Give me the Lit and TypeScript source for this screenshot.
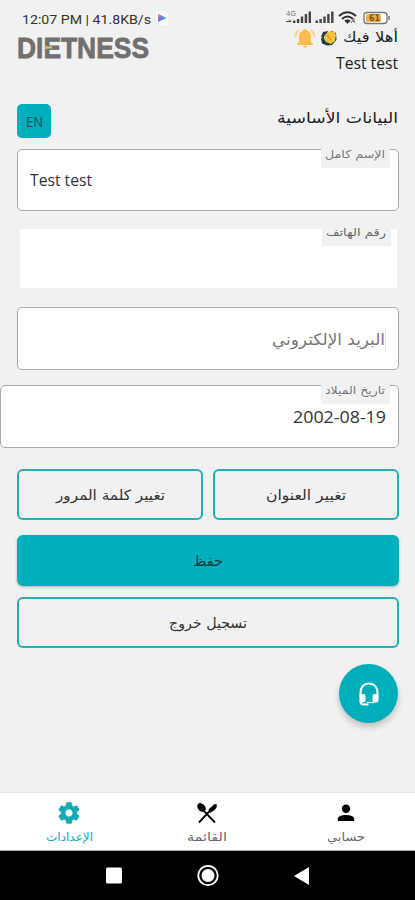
import { LitElement, html, svg, css } from "lit";
import { customElement } from "lit/decorators.js";

const bars = (x: number) => svg`
  ${[2.5, 4, 6.5, 9, 11.5].map((h, i) => svg`<rect x=${x + i * 3.9} y=${15 - h} width="2.4" height=${h} fill="#444"/>`)}`;

/** A single line of text set to an exact advance width. */
const fit = (text: string, width: number, size: number, face = "arabic") => html`
  <svg class="fit ${face}" width=${width} height=${Math.round(size * 1.6)}>
    <text x=${width / 2} y=${Math.round(size * 1.1)} font-size=${size} text-anchor="middle"
      textLength=${width} lengthAdjust="spacingAndGlyphs">${text}</text>
  </svg>`;

@customElement("app-root")
export class AppRoot extends LitElement {
  static styles = css`
    :host {
      display: flex;
      flex-direction: column;
      width: 415px;
      height: 900px;
      overflow: hidden;
      background: #f1f1f1;
      color: #222;
      font-family: "DejaVu Sans", sans-serif;
    }
    * { box-sizing: border-box; }
    svg { display: block; flex: none; overflow: visible; }
    .fit { fill: currentColor; }
    .arabic { font-family: "DejaVu Sans", sans-serif; direction: rtl; }
    .latin { font-family: "Open Sans", sans-serif; direction: ltr; }
    .clockface { font-family: Roboto, sans-serif; }
    .status {
      height: 28px;
      padding: 8px 23px 0 22px;
      display: flex;
      justify-content: space-between;
      color: #333;
    }
    .clock { display: flex; gap: 5px; padding-top: 1px; }
    .header { height: 64px; padding: 0 17px; display: flex; justify-content: space-between; }
    .logo { margin-top: 5px; }
    .logo text { font: bold 30px "Liberation Sans", sans-serif; }
    .greeting { display: flex; flex-direction: column; align-items: flex-end; }
    .hello { display: flex; align-items: center; height: 20px; gap: 4px; }
    .hello .fit { margin-left: 1px; }
    .user { margin-top: 3px; }
    .title {
      height: 57px;
      padding: 12px 17px 0;
      display: flex;
      justify-content: space-between;
    }
    .lang {
      width: 34px; height: 34px; border-radius: 5px; background: #00afbb;
      display: grid; place-items: center; color: #174c52; padding-top: 3px;
    }
    .heading { padding-top: 2px; }
    .field {
      position: relative;
      height: 62px;
      margin: 0 16px 0 17px;
      border: 1px solid #aaa;
      border-radius: 5px;
      background: #fff;
      display: flex;
      align-items: center;
      justify-content: flex-end;
      padding: 2px 12px 0;
      flex: none;
      color: #333;
    }
    .name { justify-content: flex-start; }
    .phone { height: 59px; margin: 18px 18px 0 20px; border: 0; border-radius: 0; }
    .email { margin-top: 19px; height: 63px; color: #777; }
    .date { margin: 15px 16px 0 0; height: 63px; }
    .label {
      position: absolute; right: 8px; top: -4px; width: 69px; height: 22px;
      background: #f1f1f1; color: #777;
      display: flex; justify-content: flex-end; padding: 0 5px 0 0;
    }
    .phone .label { right: 6px; top: -5px; color: #666; }
    .caret { width: 1px; height: 25px; background: #e6e6e6; }
    .pair { display: grid; grid-template-columns: 186px 186px; gap: 10px; margin: 21px 16px 0 17px; }
    .button {
      height: 51px; border: 2px solid #22afb8; border-radius: 6px; color: #333;
      display: flex; align-items: center; justify-content: center; padding-top: 3px; flex: none;
    }
    .wide { margin: 11px 16px 0 17px; }
    .save { margin-top: 15px; background: #00afbb; border-color: #00afbb; box-shadow: 0 1px 3px #0004; color: #0d3a3f; }
    .support {
      align-self: flex-end; width: 59px; height: 59px; margin: 16px 17px 0 0;
      border-radius: 50%; background: #00afbb; box-shadow: 0 4px 6px #0003;
      display: grid; place-items: center; flex: none;
    }
    .tabs {
      margin-top: auto; height: 59px; background: #fff; border-top: 1px solid #e7e7e7;
      border-bottom: 1px solid #aaa; display: grid; grid-template-columns: repeat(3, 138.33px); flex: none;
    }
    .tab { display: flex; flex-direction: column; align-items: center; padding-top: 7px; color: #666; gap: 2px; }
    .active { color: #18a9b4; }
    .system { height: 49px; background: #000; flex: none; }
  `;

  render() {
    return html`
      <div class="status">
        <div class="clock">
          ${fit("12:07 PM | 41.8KB/s", 129, 13.5, "clockface")}
          <svg width="12" height="16" viewBox="0 0 12 16">
            <rect width="12" height="14" y="2" rx="3" fill="#fbfbfb"/>
            <path d="M2 5 10 9 2 13Z" fill="#7175e8"/><path d="M2 5 6 7 2 9Z" fill="#f06e73"/><path d="M6 7 10 9 6 11Z" fill="#36a4df"/>
          </svg>
        </div>
        <svg width="107" height="19" viewBox="0 0 107 19">
          <text x="1" y="8" font-size="7" fill="#777">4G</text>
          <path d="M1 13.500h5l-2-2" fill="none" stroke="#444"/>
          ${bars(8)}${bars(30.5)}
          <g fill="none" stroke="#333" stroke-width="2">
            <path d="M54 8q8.500-7.500 17 0M57 11q5.500-5 11 0M60 13.500q2.500-2.500 5 0"/>
          </g>
          <path d="m60 13 2.500 3 2.500-3Z" fill="#333"/><path d="M66 15l2-3 2 3M69 10v4" stroke="#666" fill="none"/>
          <rect x="79" y="4.500" width="23" height="11" rx="3" fill="#fff" stroke="#777" stroke-width="1.300"/>
          <rect x="81" y="6" width="15" height="8" rx="1.500" fill="#f2ae43"/>
          <path d="M104 8v4" stroke="#777" stroke-width="1.500"/>
          <text x="84" y="13" font-size="8" font-weight="bold" fill="#76511c">61</text>
        </svg>
      </div>
      <div class="header">
        <svg class="logo" width="134" height="36" viewBox="0 0 134 36">
          <text x="0" y="25" fill="#707070" stroke="#707070" stroke-width=".8" textLength="132" lengthAdjust="spacingAndGlyphs">DIETNESS</text>
          <path d="M28 14.500h7" stroke="#e6c47b" stroke-width="2"/><path d="m27 14.500 3-2v4Z" fill="#f0b23c"/>
        </svg>
        <div class="greeting">
          <div class="hello">
            <svg width="22" height="21" viewBox="0 0 22 21">
              <path d="M11 1c1 0 1.700.7 1.700 1.600C16 3.600 17 6 17 9v5l2 2v1H3v-1l2-2V9c0-3 1-5.400 4.300-6.400C9.300 1.700 10 1 11 1ZM8.500 18h5q-2.500 3.500-5 0Z" fill="#ffbc4c"/>
              <path d="M5 2Q1.500 4.500 1.500 9M17 2q3.500 2.500 3.500 7" fill="none" stroke="#ffcf7d" stroke-width="1.700"/>
            </svg>
            <svg width="18" height="18" viewBox="0 0 18 18">
              <path d="m1 8 2-5 5-1-3 7ZM12 2l4 2 .5 7-4.500 5-5 .5-5-2-1-5Z" fill="#193e49"/>
              <path d="m4 7 5-5 2 1 3-1 2 4-1 6-4 3-5-2-2-3Z" fill="#f8bf3c"/>
              <path d="m7 6 4 5" stroke="#a87525" stroke-width=".8" fill="none"/>
            </svg>
            ${fit("أهلا فيك", 55, 14)}
          </div>
          <div class="user">${fit("Test test", 62, 16, "latin")}</div>
        </div>
      </div>
      <div class="title">
        <div class="lang">${fit("EN", 17, 14, "latin")}</div>
        <div class="heading">${fit("البيانات الأساسية", 121, 15)}</div>
      </div>
      <div class="field name">${fit("Test test", 62, 15.5, "latin")}<div class="label">${fit("الإسم كامل", 60, 11)}</div></div>
      <div class="field phone"><div class="label">${fit("رقم الهاتف", 60, 11)}</div></div>
      <div class="field email">${fit("البريد الإلكتروني", 113, 16)}<span class="caret"></span></div>
      <div class="field date">${fit("2002-08-19", 93, 16, "latin")}<div class="label">${fit("تاريخ الميلاد", 60, 11)}</div></div>
      <div class="pair">
        <div class="button">${fit("تغيير كلمة المرور", 109, 14)}</div>
        <div class="button">${fit("تغيير العنوان", 80, 14)}</div>
      </div>
      <div class="button wide save">${fit("حفظ", 30, 14)}</div>
      <div class="button wide">${fit("تسجيل خروج", 78, 14)}</div>
      <div class="support">
        <svg width="24" height="26" viewBox="0 0 24 26">
          <path d="M3.500 16v-4C3.500 6 7 2.500 12 2.500s8.500 3.500 8.500 9.500v4" fill="none" stroke="#fff" stroke-width="2"/>
          <rect x="2.500" y="13" width="6" height="8.500" rx="2" fill="#fff"/><rect x="15.500" y="13" width="6" height="8.500" rx="2" fill="#fff"/>
          <path d="M3.500 19v2q0 2.500 3 2.500h5" fill="none" stroke="#fff" stroke-width="1.800"/><path d="M10 21.500h7" stroke="#fff" stroke-width="1.300"/>
        </svg>
      </div>
      <div class="tabs">
        <div class="tab active">
          <svg width="26" height="26" viewBox="0 0 24 24"><path fill="currentColor" stroke="currentColor" stroke-width=".6" d="M19.140 12.940c.04-.3.060-.610.060-.940 0-.320-.020-.640-.070-.940l2.030-1.580c.18-.14.230-.410.120-.610l-1.920-3.320c-.12-.22-.370-.290-.590-.220l-2.390.960c-.5-.380-1.030-.7-1.620-.940l-.360-2.540c-.04-.24-.240-.410-.480-.410h-3.840c-.24 0-.430.170-.470.410l-.360 2.540c-.59.240-1.130.570-1.620.940l-2.390-.96c-.22-.08-.470 0-.590.220L2.740 8.870c-.12.210-.080.470.120.610l2.030 1.580c-.05.300-.090.630-.090.940s.02.640.070.940l-2.030 1.580c-.18.140-.230.410-.120.610l1.920 3.320c.12.220.370.290.590.220l2.390-.960c.5.380 1.030.7 1.620.940l.36 2.540c.05.240.240.410.480.410h3.840c.24 0 .440-.170.470-.410l.36-2.540c.59-.24 1.130-.560 1.620-.940l2.390.96c.22.080.470 0 .590-.220l1.920-3.320c.12-.22.070-.470-.120-.610l-2.010-1.580ZM12 15.600c-1.980 0-3.600-1.620-3.600-3.600s1.620-3.600 3.600-3.600 3.600 1.620 3.600 3.600-1.620 3.600-3.600 3.600Z"/></svg>
          ${fit("الإعدادات", 47, 11.5)}
        </div>
        <div class="tab">
          <svg width="26" height="26" viewBox="0 0 26 26"><path d="m8 9 13 13.500M5 22.500 17 9.500" stroke="#080808" stroke-width="1.900"/><ellipse cx="7.500" cy="7.500" rx="3.600" ry="5" transform="rotate(-42 7.500 7.500)"/><path d="M14.500 9.500 20.500 4l2.500.5q0 3.500-2.500 5.500l-4.500 3Z"/></svg>
          ${fit("القائمة", 40, 11.5)}
        </div>
        <div class="tab">
          <svg width="26" height="26" viewBox="0 0 26 26"><circle cx="13" cy="8.800" r="4.200"/><path d="M4.800 21v-2c0-3 4-4 8.200-4s8.200 1 8.200 4v2Z"/></svg>
          ${fit("حسابي", 38, 11.5)}
        </div>
      </div>
      <div class="system">
        <svg width="415" height="49" viewBox="0 0 415 49" fill="#fff">
          <rect x="106" y="16.500" width="16" height="16" rx="1.500"/>
          <circle cx="208" cy="24.500" r="9.700" fill="none" stroke="#fff" stroke-width="1.800"/><circle cx="208" cy="24.500" r="6.500"/>
          <path d="M309 16v18l-15-9Z"/>
        </svg>
      </div>`;
  }
}
